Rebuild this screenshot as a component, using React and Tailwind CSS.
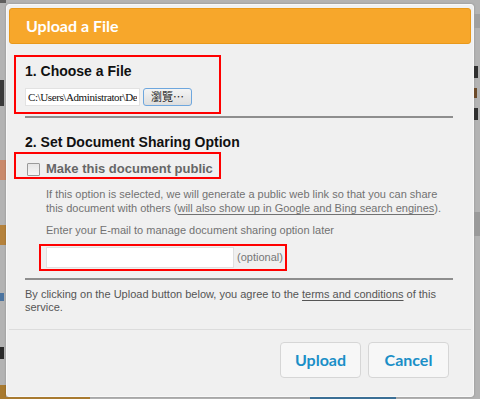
import React from "react";

const sans = { fontFamily: '"Liberation Sans", Arial, sans-serif' };

export default function App() {
  return (
    <div className="w-[480px] h-[399px] bg-[#b3b3b3] flex overflow-hidden" style={sans}>
      {/* page behind the overlay, left edge */}
      <div className="w-[6px] flex flex-col shrink-0">
        <div className="h-[3px] bg-[#5e5e5e]" />
        <div className="h-[77px]" />
        <div className="h-[26px] w-[4px] bg-[#3a3a3a]" />
        <div className="h-[54px]" />
        <div className="h-[20px] bg-[#c98a6c]" />
        <div className="h-[45px]" />
        <div className="h-[20px] bg-[#b5823c]" />
        <div className="h-[48px]" />
        <div className="h-[8px] w-[4px] bg-[#4b74a0]" />
        <div className="h-[46px]" />
        <div className="h-[12px] w-[4px] bg-[#2a2a2a]" />
        <div className="h-[26px]" />
        <div className="flex-1 bg-[#a87a30]" />
      </div>

      <div className="w-[468px] shrink-0 flex flex-col">
        <div className="h-[4px]" />
        {/* dialog */}
        <div className="w-[468px] h-[393px] bg-[#f0f0f0] border border-[#f8f8f8] rounded-[3px] shadow-[0_0_2px_rgba(0,0,0,0.25)] flex flex-col">
          <div className="mt-[3px] mx-[2px] h-[36px] bg-[#f7a72b] border border-[#e9991b] rounded-[3px] flex items-center pl-[16px]">
            <span className="text-white text-[16px] font-bold leading-none" style={{ fontFamily: "Lato, sans-serif" }}>
              Upload a File
            </span>
          </div>

          <div className="relative h-[285px] pt-[19px] pl-[18px] pr-[20px]">
            <h2 className="text-[14px] leading-[16px] font-bold text-[#111]">1. Choose a File</h2>
            <div className="mt-[8px] h-[19px] flex items-center">
              <input
                type="text"
                readOnly
                value="C:\Users\Administrator\Desktop\file.pdf"
                className="w-[115px] h-[18px] bg-white border border-[#e2e2e2] px-[2px] text-[11px] tracking-[-0.4px] text-[#111] outline-none"
                style={{ fontFamily: '"Liberation Serif", "Times New Roman", serif' }}
              />
              <button
                className="ml-[3px] w-[49px] h-[18px] rounded-[3px] border border-[#6ea7de] bg-gradient-to-b from-[#f4f4f4] to-[#dedede] text-[11px] leading-none text-[#222] flex items-center justify-center"
                style={{ fontFamily: '"Noto Sans CJK TC", sans-serif' }}
              >
                瀏覽⋯
              </button>
            </div>

            <div className="mt-[10px] border-t-2 border-[#8e8e8e]" />

            <h2 className="mt-[16px] text-[14px] leading-[16px] font-bold text-[#111]">2. Set Document Sharing Option</h2>
            <label className="mt-[11px] ml-[2px] h-[16px] flex items-center gap-[6px]">
              <span className="w-[13px] h-[13px] border border-[#9a9a9a] bg-gradient-to-b from-[#e6e6e6] to-[#f7f7f7] rounded-[1px]" />
              <span className="text-[13px] leading-[16px] font-bold text-[#666]">Make this document public</span>
            </label>

            <p className="mt-[10px] ml-[21px] text-[11px] leading-[14px] text-[#727272]">
              If this option is selected, we will generate a public web link so that you can share
              <br />
              this document with others (<span className="underline underline-offset-2">will also show up in Google and Bing search engines</span>).
            </p>
            <p className="mt-[8px] ml-[21px] text-[11px] leading-[14px] text-[#727272]">
              Enter your E-mail to manage document sharing option later
            </p>
            <div className="mt-[10px] ml-[21px] flex items-center gap-[3px]">
              <input type="text" className="w-[188px] h-[21px] bg-white border border-[#e0e0e0] outline-none" />
              <span className="text-[11px] text-[#777]">(optional)</span>
            </div>

            <div className="mt-[10px] border-t-2 border-[#8e8e8e]" />

            <p className="mt-[8px] text-[11px] leading-[13px] text-[#555]">
              By clicking on the Upload button below, you agree to the{" "}
              <span className="underline underline-offset-2">terms and conditions</span> of this
              <br />
              service.
            </p>

            {/* annotation boxes drawn over the dialog */}
            <div className="absolute left-[7px] top-[11px] w-[207px] h-[59px] border-2 border-[#ff0000] pointer-events-none" />
            <div className="absolute left-[7px] top-[108px] w-[207px] h-[27px] border-2 border-[#ff0000] pointer-events-none" />
            <div className="absolute left-[32px] top-[200px] w-[248px] h-[27px] border-2 border-[#ff0000] pointer-events-none" />
          </div>

          <div className="mx-[2px] border-t border-[#dcdcdc] pt-[12px] pr-[22px] flex justify-end gap-[7px]" style={{ fontFamily: "Lato, sans-serif" }}>
            <button className="w-[81px] h-[36px] bg-[#f7f7f7] border border-[#d6d6d6] rounded-[4px] text-[16px] font-bold text-[#1b8fc7]">
              Upload
            </button>
            <button className="w-[81px] h-[36px] bg-[#f7f7f7] border border-[#d6d6d6] rounded-[4px] text-[16px] font-bold text-[#1b8fc7]">
              Cancel
            </button>
          </div>
        </div>
        <div className="flex-1 flex">
          <div className="w-[84px] bg-[#a87a30]" />
          <div className="w-[220px]" />
          <div className="w-[86px] bg-[#3b6f95]" />
        </div>
      </div>

      {/* page behind the overlay, right edge */}
      <div className="flex-1 flex flex-col">
        <div className="h-[14px]" />
        <div className="h-[14px] bg-[#a0a0a0]" />
        <div className="h-[38px]" />
        <div className="h-[12px] w-[4px] bg-[#2f2f2f]" />
        <div className="h-[10px]" />
        <div className="h-[10px] w-[3px] bg-[#6b4a2a]" />
        <div className="h-[10px]" />
        <div className="h-[12px] w-[4px] bg-[#2f2f2f]" />
        <div className="h-[92px]" />
        <div className="h-[24px] bg-[#9a9a9a]" />
      </div>
    </div>
  );
}
